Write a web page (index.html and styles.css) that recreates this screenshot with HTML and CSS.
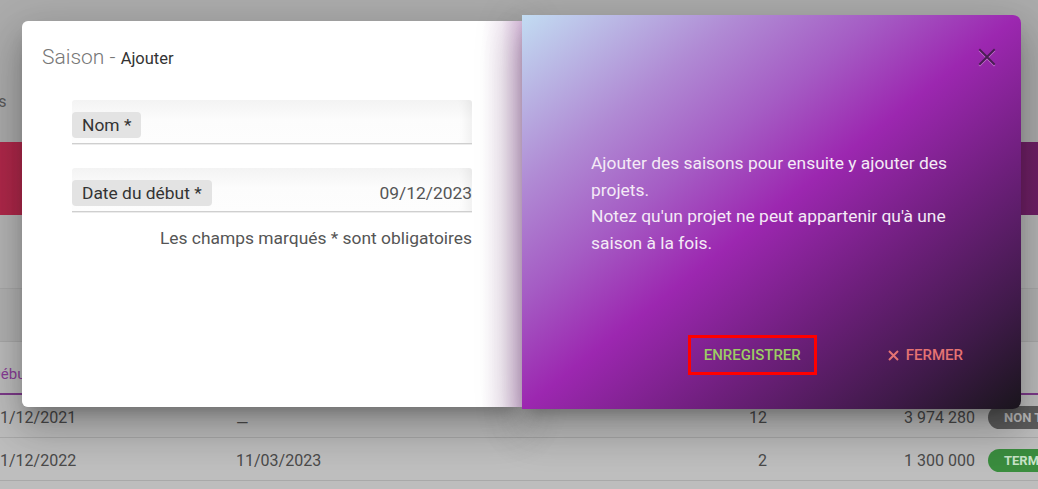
FILE: index.html
```html
<!DOCTYPE html>
<html lang="fr">
<head>
<meta charset="utf-8">
<title>Saison - Ajouter</title>
<link rel="stylesheet" href="styles.css">
</head>
<body>
<div class="page">
  <div class="topbar">
    <div class="tabs"><span class="tab">Saisons</span></div>
  </div>
  <div class="band"></div>
  <div class="zone1"></div>
  <div class="zone2"></div>
  <div class="table">
    <div class="thead">
      <div class="c1 th">Début</div>
    </div>
    <div class="row">
      <div class="c1">01/12/2021</div>
      <div class="c2"><span class="dash">—</span></div>
      <div class="c3">12</div>
      <div class="c4">3 974 280</div>
      <div class="c5"><span class="badge grey">NON TERMINÉE</span></div>
    </div>
    <div class="row">
      <div class="c1">01/12/2022</div>
      <div class="c2">11/03/2023</div>
      <div class="c3">2</div>
      <div class="c4">1 300 000</div>
      <div class="c5"><span class="badge green">TERMINÉE</span></div>
    </div>
  </div>
</div>

<div class="dialog">
  <div class="card">
    <div class="title"><span class="t-main">Saison</span> - <span class="t-sub">Ajouter</span></div>
    <div class="form">
      <div class="field"><span class="chip">Nom *</span></div>
      <div class="field"><span class="chip">Date du début *</span><span class="value">09/12/2023</span></div>
      <div class="note">Les champs marqués * sont obligatoires</div>
    </div>
  </div>
  <div class="panel">
    <div class="close-row">
      <svg class="close" width="18" height="18" viewBox="0 0 18 18"><path d="M2 2 L16 16 M16 2 L2 16" /></svg>
    </div>
    <div class="info">
      <p>Ajouter des saisons pour ensuite y ajouter des projets.</p>
      <p>Notez qu'un projet ne peut appartenir qu'à une saison à la fois.</p>
    </div>
    <div class="actions">
      <span class="btn save">ENREGISTRER</span>
      <span class="btn cancel"><svg class="x" width="11" height="11" viewBox="0 0 11 11"><path d="M1 1 L10 10 M10 1 L1 10"/></svg>FERMER</span>
    </div>
  </div>
</div>
</body>
</html>
```

FILE: styles.css
```css
* { box-sizing: border-box; }
html, body { margin: 0; padding: 0; }
body {
  width: 1038px;
  height: 489px;
  overflow: hidden;
  font-family: Roboto, "Liberation Sans", sans-serif;
  background: #bdbdbd;
  position: relative;
}

.page { width: 1038px; overflow: hidden; }
.topbar {
  height: 142px;
  background: #acacac;
  padding-top: 90px;
}
.tabs { margin-left: -50px; }
.tab { font-size: 16px; color: #5a5a5a; line-height: 24px; }
.band {
  height: 73px;
  background: linear-gradient(to right, #b0284a 0%, #8a2257 60%, #6e2066 100%);
}
.zone1 {
  height: 74px;
  background: #b6b6b6;
  border-bottom: 1px solid #a9a9a9;
}
.zone2 {
  height: 53px;
  background: #b2b2b2;
  border-bottom: 1px solid #a9a9a9;
}
.table { margin-left: -9px; width: 1200px; }
.thead {
  display: flex;
  height: 53px;
  align-items: center;
  border-bottom: 2px solid #7d3a8a;
  background: #bdbdbd;
}
.th { color: #8a3d98; font-size: 15px; padding-top: 12px; }
.row {
  display: flex;
  align-items: center;
  height: 43px;
  border-bottom: 1px solid #a9a9a9;
  font-size: 16px;
  color: #4a4a4a;
  background: #bebebe;
  padding-top: 2px;
}
.row > div { flex-shrink: 0; }
.c1 { width: 245px; }
.c2 { width: 300px; }
.c3 { width: 231px; text-align: right; }
.c4 { width: 208px; text-align: right; }
.c5 { padding-left: 13px; }
.dash { display: inline-block; transform: translateY(6px); }
.badge {
  display: inline-block;
  height: 23px;
  line-height: 23px;
  padding: 0 16px;
  border-radius: 12px;
  font-size: 13px;
  font-weight: 700;
}
.badge.grey { background: #5d5d5d; color: #bdbdbd; }
.badge.green { background: #3b8d3f; color: #c8e3c8; }

/* dialog overlay */
.dialog {
  position: absolute;
  left: 22px;
  top: 15px;
  width: 999px;
  height: 394px;
  display: flex;
  align-items: flex-end;
}
.card {
  width: 500px;
  height: 386px;
  margin-bottom: 2px;
  border-radius: 6px 0 0 6px;
  background: linear-gradient(to right, #ffffff 0%, #ffffff 92%, #f6eef7 96%, #dec0e2 100%);
  box-shadow: 0 11px 15px -7px rgba(0,0,0,.25), 0 24px 38px 3px rgba(0,0,0,.16), 0 9px 46px 8px rgba(0,0,0,.12);
}
.title {
  padding: 24px 20px 0;
  line-height: 24px;
  color: #777;
  font-size: 21px;
  font-weight: 300;
}
.t-main { font-weight: 300; color: #777; }
.t-sub { font-size: 16.5px; font-weight: 400; color: #333; }

.form {
  width: 400px;
  margin: 29px auto 0;
  display: flex;
  flex-direction: column;
}
.field {
  height: 44px;
  display: flex;
  align-items: flex-end;
  justify-content: space-between;
  padding-bottom: 5px;
  border-bottom: 1px solid #cfcfcf;
  background: linear-gradient(to bottom, #f3f3f3 0%, #fcfcfc 45%, #fdfdfd 100%);
  box-shadow: inset -14px 0 12px -10px rgba(0,0,0,0.06), 0 1px 0 #ececec;
  border-radius: 3px 3px 0 0;
}
.field + .field { margin-top: 24px; }
.chip {
  height: 26px;
  line-height: 26px;
  padding: 0 10px;
  background: #e3e3e3;
  border-radius: 4px;
  font-size: 17.4px;
  color: #333;
}
.value {
  line-height: 26px;
  font-size: 17.4px;
  color: #555;
}
.note {
  margin-top: 14px;
  text-align: right;
  font-size: 17.4px;
  line-height: 24px;
  color: #555;
}

.panel {
  width: 499px;
  height: 394px;
  border-radius: 0 8px 8px 0;
  background: linear-gradient(to bottom right, #c2dcf2 0%, #b08ad4 22%, #a55cc4 36%, #9c27b0 50%, #6e1f7c 68%, #3f1a49 86%, #19151c 100%);
  box-shadow: 0 11px 15px -7px rgba(0,0,0,.25), 0 24px 38px 3px rgba(0,0,0,.16), 0 9px 46px 8px rgba(0,0,0,.12);
  display: flex;
  flex-direction: column;
  padding: 0 66px 0 69px;
}
.close-row {
  display: flex;
  justify-content: flex-end;
  padding-top: 33px;
  margin-right: -41px;
}
.close {
  display: block;
  filter: drop-shadow(0 1px 0 rgba(230,170,235,0.6));
}
.close path { stroke: #4a1d55; stroke-width: 2; fill: none; stroke-linecap: square; }
.info {
  margin-top: 84px;
  color: #f4eaf6;
  font-size: 17.4px;
  line-height: 26.5px;
}
.info p { margin: 0; }
.actions {
  margin-top: auto;
  margin-bottom: 34px;
  margin-right: -24px;
  display: flex;
  justify-content: flex-end;
  align-items: center;
  gap: 55px;
}
.btn {
  height: 40px;
  display: inline-flex;
  align-items: center;
  font-size: 15px;
  font-weight: 500;
}
.save {
  border: 3px solid #ff0000;
  padding: 0 13px;
  color: #9ccc65;
}
.cancel {
  color: #e57373;
  padding: 0 16px;
}
.x { margin-right: 7px; }
.x path { stroke: #e57373; stroke-width: 2; fill: none; }
```
